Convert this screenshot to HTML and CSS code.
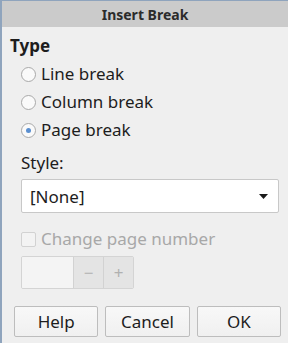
FILE: index.html
```html
<!DOCTYPE html>
<html lang="en">
<head>
  <meta charset="UTF-8">
  <title>Insert Break</title>
  <link rel="stylesheet" href="styles.css">
</head>
<body>
  <div class="dialog">
    <div class="titlebar">Insert Break</div>
    <div class="content">
      <div class="section-title">Type</div>
      <div class="radios">
        <label class="radio"><span class="dot"></span>Line break</label>
        <label class="radio"><span class="dot"></span>Column break</label>
        <label class="radio"><span class="dot checked"></span>Page break</label>
      </div>
      <div class="page-options">
        <div class="field-label">Style:</div>
        <div class="select">
          <span>[None]</span>
          <svg class="arrow" width="9" height="5" viewBox="0 0 9 5"><path d="M0 0h9L4.5 5z" fill="#1a1a1a"/></svg>
        </div>
        <label class="check disabled"><span class="box"></span>Change page number</label>
        <div class="spin">
          <div class="spin-entry"></div>
          <div class="spin-btn">&minus;</div>
          <div class="spin-btn">+</div>
        </div>
      </div>
      <div class="buttons">
        <button>Help</button>
        <button>Cancel</button>
        <button>OK</button>
      </div>
    </div>
  </div>
</body>
</html>
```

FILE: styles.css
```css
* {
  margin: 0;
  padding: 0;
  box-sizing: border-box;
}

body {
  font-family: 'Noto Sans', 'Open Sans', sans-serif;
  background-color: #efefef;
  color: #1d1d1d;
  width: 288px;
  height: 343px;
  overflow: hidden;
}

.dialog {
  height: 343px;
  border-top: 1px solid #8fa4bd;
  border-left: 2px solid #8fa4bd;
  display: flex;
  flex-direction: column;
}

.titlebar {
  height: 26px;
  background-color: #cbcbcb;
  font-size: 14px;
  font-weight: 700;
  color: #2b2b2b;
  display: flex;
  align-items: center;
  justify-content: center;
}

.content {
  padding: 9px 7px 0 8px;
  flex: 1;
  display: flex;
  flex-direction: column;
}

.section-title {
  font-size: 17px;
  font-weight: 700;
  line-height: 20px;
}

.radios {
  padding-left: 11px;
  margin-top: 7px;
  display: flex;
  flex-direction: column;
  gap: 6px;
}

.radio,
.check {
  display: flex;
  align-items: center;
  font-size: 17px;
  line-height: 22px;
}

.dot {
  width: 15px;
  height: 15px;
  border: 1px solid #a9a9a9;
  border-radius: 50%;
  background-color: #fafafa;
  margin-right: 5px;
  display: flex;
  align-items: center;
  justify-content: center;
}

.dot.checked::after {
  content: '';
  width: 5px;
  height: 5px;
  border-radius: 50%;
  background-color: #5a8fd0;
}

.page-options {
  padding-left: 11px;
  margin-top: 11px;
}

.field-label {
  font-size: 17px;
  line-height: 22px;
}

.select {
  margin-top: 5px;
  height: 34px;
  background-color: #fff;
  border: 1px solid #c8c8c8;
  border-radius: 2px;
  display: flex;
  align-items: center;
  justify-content: space-between;
  padding: 0 10px 0 8px;
  font-size: 17px;
  margin-right: 2px;
}

.check {
  margin-top: 15px;
  color: #a8a8a8;
}

.box {
  width: 15px;
  height: 15px;
  border: 1px solid #d2d2d2;
  border-radius: 2px;
  background-color: #f3f3f3;
  margin-right: 5px;
}

.spin {
  margin-top: 6px;
  width: 113px;
  height: 33px;
  border: 1px solid #d4d4d4;
  border-radius: 2px;
  display: flex;
  overflow: hidden;
}

.spin-entry {
  width: 51px;
  background-color: #f4f4f4;
}

.spin-btn {
  flex: 1;
  background-color: #e4e4e4;
  border-left: 1px solid #d2d2d2;
  color: #b0b0b0;
  font-size: 17px;
  display: flex;
  align-items: center;
  justify-content: center;
}

.buttons {
  margin-top: 17px;
  padding-left: 4px;
  display: flex;
  gap: 7px;
}

button {
  width: 85px;
  height: 31px;
  font-family: inherit;
  font-size: 17px;
  color: #1d1d1d;
  background: linear-gradient(#f8f8f8, #f0f0f0);
  border: 1px solid #bdbdbd;
  border-radius: 2px;
}
```
